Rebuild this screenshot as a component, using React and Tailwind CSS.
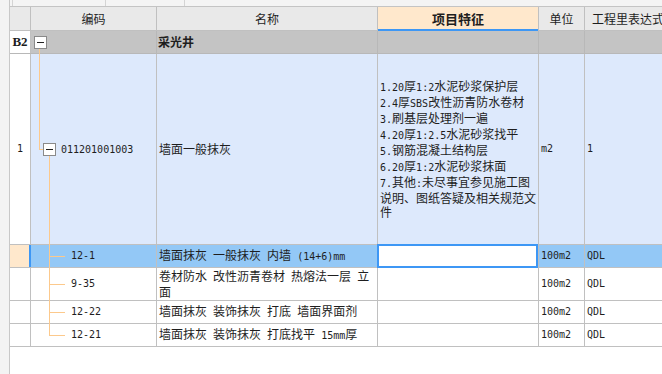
import React from 'react';

// 半角字符换成等宽小号字体，接近宋体 6px 的字宽
const Txt = ({ s }) =>
  s.split(/([\x20-\x7e]+)/).filter(Boolean).map((p, i) =>
    /^[\x20-\x7e]+$/.test(p)
      ? <span key={i} className="font-['DejaVu_Sans_Mono',monospace] text-[10px]">{p}</span>
      : <span key={i}>{p}</span>
  );

const MinusBox = () => (
  <span className="w-[13px] h-[13px] shrink-0 border border-[#8a8a8a] bg-white flex items-center justify-center">
    <span className="w-[7px] h-px bg-[#222]" />
  </span>
);

const features = [
  '1.20厚1:2水泥砂浆保护层',
  '2.4厚SBS改性沥青防水卷材',
  '3.刷基层处理剂一遍',
  '4.20厚1:2.5水泥砂浆找平',
  '5.钢筋混凝土结构层',
  '6.20厚1:2水泥砂浆抹面',
  '7.其他:未尽事宜参见施工图',
  '说明、图纸答疑及相关规范文',
  '件',
];

const items = [
  { code: '12-1', name: '墙面抹灰 一般抹灰 内墙 (14+6)mm', h: 'h-[23px]', sel: true },
  { code: '9-35', name: '卷材防水 改性沥青卷材 热熔法一层 立面', h: 'h-[33px]' },
  { code: '12-22', name: '墙面抹灰 装饰抹灰 打底 墙面界面剂', h: 'h-[23px]' },
  { code: '12-21', name: '墙面抹灰 装饰抹灰 打底找平 15mm厚', h: 'h-[23px]', last: true },
];

const App = () => {
  return (
    <div className="w-[662px] h-[374px] overflow-hidden bg-white flex font-['Noto_Sans_CJK_SC',sans-serif] text-[12px] leading-[14px] text-[#1e1e1e]">
      {/* 左侧灰条 */}
      <div className="w-[10px] shrink-0 bg-[#f3f3f3] border-r border-[#c8c8c8]" />

      <div className="flex flex-col w-[661px] shrink-0">
        {/* 上方表格的残边 */}
        <div className="flex h-[7px] bg-[#f4f4f4] border-b border-[#c4c4c4]">
          <div className="w-[3px] border-r border-[#d4d4d4]" />
          <div className="w-[93px] border-r border-[#d4d4d4]" />
          <div className="w-[79px] border-r border-[#d4d4d4]" />
        </div>

        {/* 表头 */}
        <div className="flex h-[24px] border-b border-[#c0c0c0] bg-[#e9e9e9]">
          <div className="w-[21px] shrink-0 border-r border-[#c0c0c0]" />
          <div className="w-[126px] shrink-0 border-r border-[#c0c0c0] flex items-center justify-center">编码</div>
          <div className="w-[221px] shrink-0 border-r border-[#c0c0c0] flex items-center justify-center">名称</div>
          <div className="relative w-[161px] shrink-0 border-r border-[#c0c0c0] bg-[#ffe8cc] flex items-center justify-center font-bold text-[13px]">
            项目特征
            <div className="absolute left-0 right-0 -bottom-px h-[2px] bg-[#3d97f5]" />
          </div>
          <div className="w-[46px] shrink-0 border-r border-[#c0c0c0] flex items-center justify-center">单位</div>
          <div className="w-[86px] shrink-0 flex items-center justify-center">工程里表达式</div>
        </div>

        {/* B2 分部 */}
        <div className="flex h-[23px] border-b border-[#b8b8b8] bg-[#c4c4c4]">
          <div className="w-[21px] shrink-0 border-r border-[#c0c0c0] bg-white flex items-center justify-center font-['Liberation_Serif',serif] font-bold text-[13px]">B2</div>
          <div className="relative w-[126px] shrink-0 border-r border-[#b8b8b8] flex items-center pl-[3px]">
            <MinusBox />
            <div className="absolute left-[8px] top-[calc(50%+7px)] -bottom-px w-px bg-[#fcc98c]" />
          </div>
          <div className="w-[221px] shrink-0 border-r border-[#b8b8b8] flex items-center pl-[1px] font-bold">采光井</div>
          <div className="w-[161px] shrink-0 border-r border-[#b8b8b8]" />
          <div className="w-[46px] shrink-0 border-r border-[#b8b8b8]" />
          <div className="w-[86px] shrink-0" />
        </div>

        {/* 清单行 */}
        <div className="flex h-[191px] border-b border-[#c0c0c0] bg-[#dde9fc]">
          <div className="w-[21px] shrink-0 border-r border-[#c0c0c0] bg-white flex items-center justify-center"><Txt s="1" /></div>
          <div className="relative w-[126px] shrink-0 border-r border-[#c0c0c0] flex items-center pl-[12px]">
            <div className="absolute left-[8px] top-0 h-1/2 w-px bg-[#fcc98c]" />
            <div className="absolute left-[8px] top-1/2 w-[4px] h-px bg-[#fcc98c]" />
            <div className="absolute left-[18px] top-[calc(50%+7px)] -bottom-px w-px bg-[#fcc98c]" />
            <MinusBox />
            <span className="ml-[5px]"><Txt s="011201001003" /></span>
          </div>
          <div className="w-[221px] shrink-0 border-r border-[#c0c0c0] flex items-center pl-[2px]">墙面一般抹灰</div>
          <div className="w-[161px] shrink-0 border-r border-[#c0c0c0] flex flex-col justify-center pl-[2px]">
            {features.map((f) => (
              <div key={f} className="whitespace-nowrap"><Txt s={f} /></div>
            ))}
          </div>
          <div className="w-[46px] shrink-0 border-r border-[#c0c0c0] flex items-center pl-[2px]"><Txt s="m2" /></div>
          <div className="w-[86px] shrink-0 flex items-center pl-[2px]"><Txt s="1" /></div>
        </div>

        {/* 定额子目 */}
        {items.map((it) => (
          <div key={it.code} className={`flex ${it.h} border-b border-[#c0c0c0] ${it.sel ? 'bg-[#93c8f6]' : 'bg-white'}`}>
            <div className={`w-[21px] shrink-0 ${it.sel ? 'bg-[#ffe8cc] border-r-2 border-[#3d97f5]' : 'bg-white border-r border-[#c0c0c0]'}`} />
            <div className="relative w-[126px] shrink-0 border-r border-[#c0c0c0] flex items-center pl-[40px]">
              <div className={`absolute left-[18px] top-0 w-px bg-[#fcc98c] ${it.last ? 'h-1/2' : '-bottom-px'}`} />
              <div className="absolute left-[18px] top-1/2 w-[16px] h-px bg-[#fcc98c]" />
              <Txt s={it.code} />
            </div>
            <div className="w-[221px] shrink-0 border-r border-[#c0c0c0] flex items-center pl-[2px]">
              <div><Txt s={it.name} /></div>
            </div>
            <div className="relative w-[161px] shrink-0 border-r border-[#c0c0c0]">
              {it.sel && <div className="absolute -left-px -top-px right-0 -bottom-px border-2 border-[#3d97f5] bg-white" />}
            </div>
            <div className="w-[46px] shrink-0 border-r border-[#c0c0c0] flex items-center pl-[2px]"><Txt s="100m2" /></div>
            <div className="w-[86px] shrink-0 flex items-center pl-[2px]"><Txt s="QDL" /></div>
          </div>
        ))}
      </div>
    </div>
  );
};

export default App;
